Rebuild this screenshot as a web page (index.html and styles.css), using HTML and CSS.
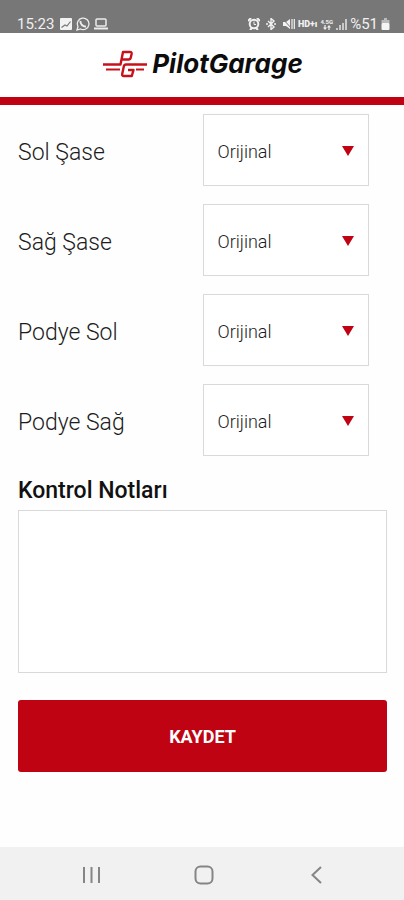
FILE: index.html
```html
<!DOCTYPE html>
<html lang="tr">
<head>
<meta charset="utf-8">
<meta name="viewport" content="width=device-width, initial-scale=1">
<title>Pilot Garage</title>
<link rel="stylesheet" href="styles.css">
</head>
<body>
<div class="statusbar">
  <div class="status-group">
    <span class="status-time">15:23</span>
    <svg class="icon-image" width="12" height="12" viewBox="0 0 12 12"><rect width="12" height="12" rx="1" fill="#f2f2f2"/><path d="M1.500 9.500L5 7l2 1 3.500-4.500" fill="none" stroke="#777" stroke-width="1.2"/></svg>
    <svg width="14" height="14" viewBox="0 0 14 14"><path d="M1 13l1-3.500A5.800 5.800 0 1 1 4.500 12z" fill="none" stroke="#ededed" stroke-width="1.300"/><path d="M4.500 4C4 7 7 10 10 9.500" fill="none" stroke="#ededed" stroke-width="2"/></svg>
    <svg width="14" height="12" viewBox="0 0 14 12"><rect x="2" y="1" width="10" height="7" rx="1" fill="none" stroke="#ededed" stroke-width="1.500"/><path d="M0 10.500h14" stroke="#ededed" stroke-width="2"/></svg>
  </div>
  <div class="status-group status-right">
    <svg width="12" height="12" viewBox="0 0 12 12"><path d="M0 3l3-3M12 3L9 0M2 12l2-2M10 12l-2-2" stroke="#f2f2f2" stroke-width="2"/><circle cx="6" cy="6" r="4.300" fill="none" stroke="#f2f2f2" stroke-width="2"/><path d="M6 3.500V6.500h2" fill="none" stroke="#f2f2f2"/></svg>
    <svg class="icon-bluetooth" width="10" height="12" viewBox="0 0 10 12"><path d="M2 3l6 6-3 2.500V.5L8 3 2 9" fill="none" stroke="#f2f2f2" stroke-width="1.400"/><path d="M0 6h2M8 6h2" stroke="#f2f2f2" stroke-width="1.500"/></svg>
    <svg width="13" height="12" viewBox="0 0 13 12"><path d="M1 4h3l4-3v10L4 8H1z" fill="#f2f2f2"/><path d="M0 0l11 12" stroke="#777" stroke-width="1"/><path d="M10 1v10M12.300 1v10" stroke="#f2f2f2" stroke-width="1.200"/></svg>
    <span class="status-hd">HD+ı</span>
    <span class="status-net"><span>4.5G</span><svg width="8" height="5" viewBox="0 0 8 5"><path d="M2 0v3M6 5V2" stroke="#f2f2f2" stroke-width="1.200"/><path d="M0 2.500h4L2 5zM4 2.500h4L6 0z" fill="#f2f2f2"/></svg></span>
    <svg width="11" height="11" viewBox="0 0 11 11"><path d="M1 9v2M4 6v5M7 4v7" stroke="#e4e4e4" stroke-width="1.500"/><path d="M10 0v11" stroke="#e4e4e4" stroke-width="1.500"/></svg>
    <span class="status-battery">%51</span>
    <svg width="9" height="12" viewBox="0 0 9 12"><path d="M3 0h3v2h2.500v3h-8V2H3z" fill="#bbb"/><rect x=".5" y="5" width="8" height="7" rx="1" fill="#f5f5f5"/></svg>
  </div>
</div>

<header class="brand">
  <svg width="44" height="30" viewBox="0 0 44 30" role="img" aria-label="PG">
    <g fill="none" stroke="#c8101b" stroke-linejoin="round">
      <path d="M0 15.500h17.500L20 3h7q2 0 1.600 2l-.8 3.500q-.4 2-2.300 2H19" stroke-width="2.400"/>
      <path d="M44 15.500H23q-1.800 0-2.200 2l-1.600 7.500q-.4 2 1.600 2h8L30.500 21H25" stroke-width="2.400"/>
      <path d="M3 20.500h14M33 20.500h8" stroke-width="2"/>
    </g>
  </svg>
  <span class="brand-name">PilotGarage</span>
</header>

<main class="form-page">
  <form class="form">
    <div class="field">
      <label for="sol-sase">Sol Şase</label>
      <div class="picker"><select id="sol-sase"><option>Orijinal</option></select><svg class="arrow" width="12" height="10" viewBox="0 0 12 10"><path d="M0 0h12L6 10z"/></svg></div>
    </div>
    <div class="field">
      <label for="sag-sase">Sağ Şase</label>
      <div class="picker"><select id="sag-sase"><option>Orijinal</option></select><svg class="arrow" width="12" height="10" viewBox="0 0 12 10"><path d="M0 0h12L6 10z"/></svg></div>
    </div>
    <div class="field">
      <label for="podye-sol">Podye Sol</label>
      <div class="picker"><select id="podye-sol"><option>Orijinal</option></select><svg class="arrow" width="12" height="10" viewBox="0 0 12 10"><path d="M0 0h12L6 10z"/></svg></div>
    </div>
    <div class="field">
      <label for="podye-sag">Podye Sağ</label>
      <div class="picker"><select id="podye-sag"><option>Orijinal</option></select><svg class="arrow" width="12" height="10" viewBox="0 0 12 10"><path d="M0 0h12L6 10z"/></svg></div>
    </div>
    <label class="notes-label" for="notes">Kontrol Notları</label>
    <textarea id="notes" class="notes"></textarea>
    <button class="save" type="button">KAYDET</button>
  </form>
</main>

<nav class="navbar">
  <button type="button" aria-label="Son uygulamalar"><svg width="20" height="18" viewBox="0 0 20 18"><path d="M2 1v16M9.500 1v16M17 1v16"/></svg></button>
  <button type="button" aria-label="Ana ekran"><svg width="20" height="20" viewBox="0 0 20 20"><rect x="1.500" y="1.500" width="17" height="17" rx="5"/></svg></button>
  <button type="button" aria-label="Geri"><svg width="20" height="18" viewBox="0 0 20 18"><path d="M15 1L6.500 9l8.500 8"/></svg></button>
</nav>
</body>
</html>
```
FILE: styles.css
```css
* {
  box-sizing: border-box;
}

body {
  margin: 0;
  min-height: 100vh;
  display: flex;
  flex-direction: column;
  background: #fefefe;
  color: #1c1c1c;
  font-family: Roboto, "Liberation Sans", sans-serif;
}

.statusbar {
  display: flex;
  justify-content: space-between;
  height: 33px;
  padding: 14px 14px 0 17px;
  background: #777;
  color: #f0f0f0;
}

.status-group {
  display: flex;
  align-items: center;
  gap: 4px;
  height: 20px;
}

.status-right {
  gap: 3px;
}

.status-time,
.status-battery {
  font-size: 15px;
  line-height: 20px;
}

.icon-image {
  margin-left: 2px;
}

.icon-bluetooth {
  margin: 0 3px;
}

.status-hd {
  font-size: 9px;
  font-weight: 900;
}

.status-net {
  display: flex;
  flex-direction: column;
  align-items: center;
  font-size: 6px;
  font-weight: 700;
  line-height: 6px;
}

.brand {
  display: flex;
  align-items: center;
  justify-content: center;
  gap: 5px;
  height: 72px;
  padding: 0 0 2px 2px;
  border-bottom: 8px solid #c00312;
  background: #fff;
}

.brand-name {
  color: #0c0c0c;
  font-family: Inter, Roboto, sans-serif;
  font-size: 26px;
  font-style: italic;
  font-weight: 700;
  line-height: 30px;
}

.form-page {
  flex: 1;
  padding: 9px 17px 24px 18px;
}

.form {
  display: flex;
  flex-direction: column;
}

.field {
  display: grid;
  grid-template-columns: 50% 45%;
  align-items: center;
  margin-bottom: 18px;
  font-size: 23px;
  font-weight: 300;
}

.field label {
  padding-top: 4px;
}

.picker {
  position: relative;
}

.picker select {
  display: block;
  width: 100%;
  height: 72px;
  padding: 2px 40px 0 14px;
  border: 1px solid #d9d9d9;
  border-radius: 0;
  appearance: none;
  background: #fff;
  color: #1c1c1c;
  font-family: inherit;
  font-size: 18px;
  font-weight: 300;
}

.arrow {
  position: absolute;
  top: 32px;
  right: 15px;
  fill: #c00312;
  pointer-events: none;
}

.notes-label {
  padding-top: 2px;
  margin-bottom: 4px;
  color: #111;
  font-size: 23px;
  font-weight: 500;
  line-height: 30px;
}

.notes {
  height: 163px;
  padding: 12px;
  border: 1px solid #d9d9d9;
  background: #fff;
  font: inherit;
  resize: none;
}

.save {
  height: 72px;
  margin-top: 27px;
  border: 0;
  border-radius: 3px;
  background: #c00312;
  color: #fff;
  font-family: inherit;
  font-size: 18px;
  font-weight: 700;
}

.navbar {
  display: flex;
  justify-content: center;
  height: 53px;
  padding-left: 4px;
  background: #f1f1f1;
}

.navbar button {
  width: 28%;
  padding: 3px 0 0;
  border: 0;
  background: none;
}

.navbar svg {
  display: block;
  margin: 0 auto;
  fill: none;
  stroke: #858585;
  stroke-width: 2;
}
```
